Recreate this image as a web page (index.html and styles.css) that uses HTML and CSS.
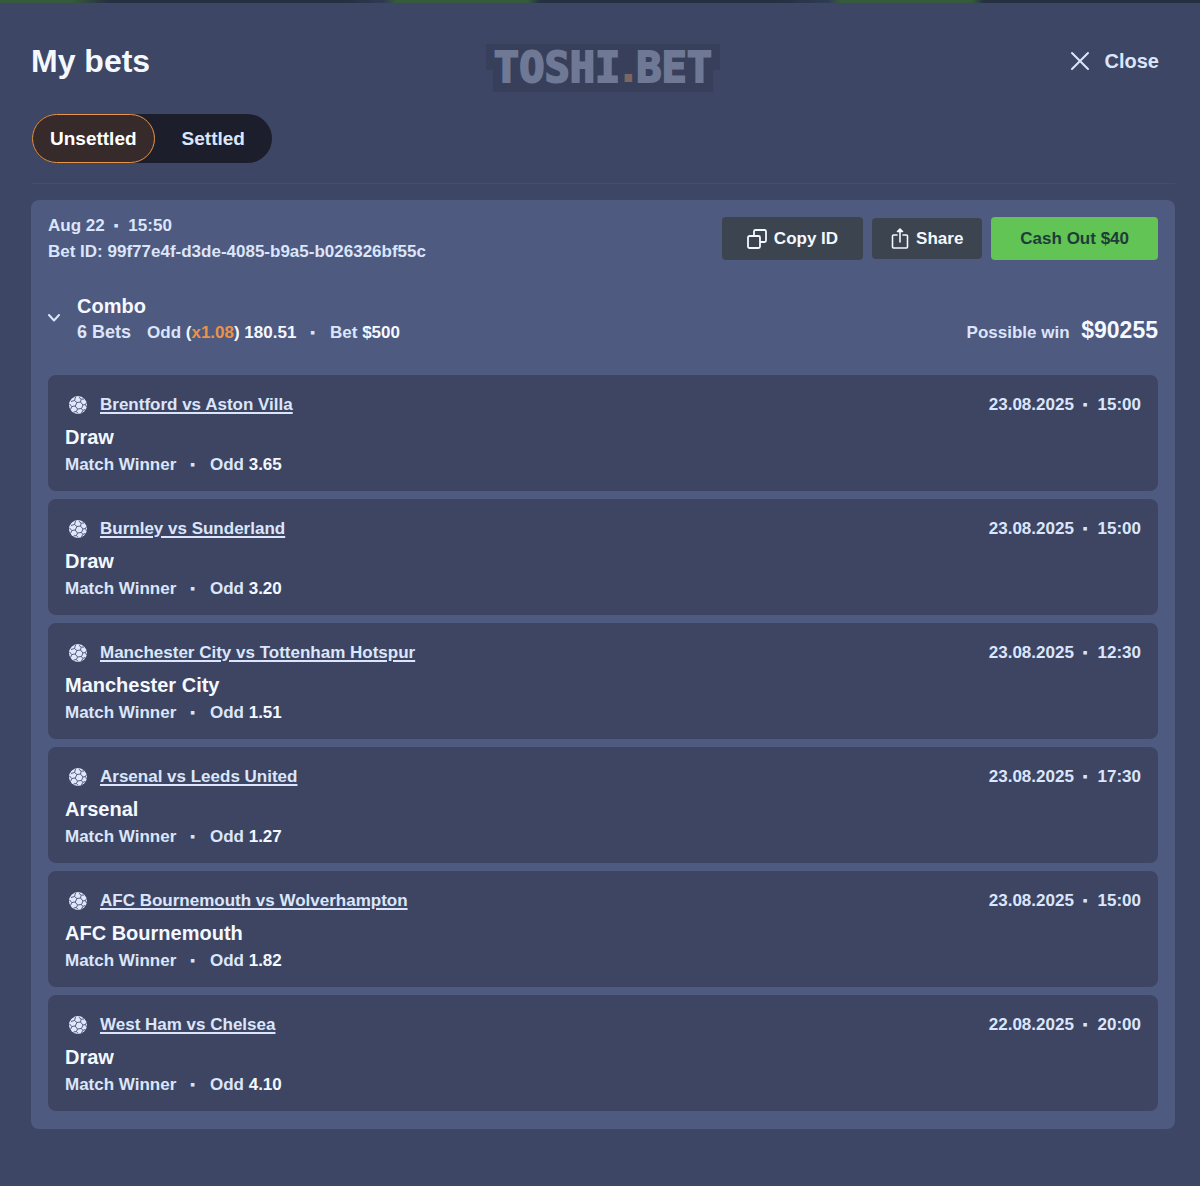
FILE: index.html
```html
<!DOCTYPE html>
<html lang="en">
<head>
    <meta charset="UTF-8">
    <meta name="viewport" content="width=device-width, initial-scale=1.0">
    <title>My bets</title>
    <link rel="stylesheet" href="styles.css">
</head>
<body>
    <svg class="sprite" aria-hidden="true">
        <symbol id="ball" viewBox="0 0 20 20">
            <circle cx="10" cy="10" r="9" fill="#dfe8fb"/>
            <g fill="none" stroke="#525c7e" stroke-width="1" stroke-linejoin="round">
                <path d="M9 7.5 L12.5 7 L15 10 L13.5 13.5 L9.5 14 L7.2 11 Z"/>
                <path d="M9 7.5 L6.5 5.5 L7.5 2 M12.5 7 L13.2 4.2 L10.8 2.2 M13.2 4.2 L16.2 4"/>
                <path d="M15 10 L17.5 9.5 L18.5 7.5 M17.5 9.5 L18.5 12"/>
                <path d="M13.5 13.5 L14.8 15.5 L13.5 18 M14.8 15.5 L17 14.5"/>
                <path d="M9.5 14 L8.5 16.5 L10 18.5 M8.5 16.5 L5.5 17"/>
                <path d="M7.2 11 L3.8 11.5 L2.5 14.5 M3.8 11.5 L1.5 9 M6.5 5.5 L3 6.5"/>
            </g>
        </symbol>
    </svg>

    <div class="backdrop"></div>

    <main class="dialog">
        <header class="dialog-header">
            <h1>My bets</h1>
            <div class="logo">TOSHI<span class="logo-dot">.</span>BET</div>
            <button type="button" class="close">
                <svg width="20" height="20" viewBox="0 0 20 20" fill="none" stroke="currentColor" stroke-width="2" stroke-linecap="round">
                    <path d="M2 2 L18 18 M18 2 L2 18"/>
                </svg>
                Close
            </button>
        </header>

        <nav class="tabs">
            <button type="button" class="tab active">Unsettled</button>
            <button type="button" class="tab">Settled</button>
        </nav>

        <hr>

        <section class="bet">
            <!-- Bet info and actions -->
            <div class="bet-header">
                <div class="bet-info">
                    <div>Aug 22<span class="dot">·</span>15:50</div>
                    <div>Bet ID: 99f77e4f-d3de-4085-b9a5-b026326bf55c</div>
                </div>
                <div class="actions">
                    <button type="button" class="btn btn-copy">
                        <svg width="20" height="20" viewBox="0 0 20 20" fill="none" stroke="currentColor" stroke-width="1.8" stroke-linejoin="round">
                            <rect x="1" y="7" width="12" height="12" rx="1.5"/>
                            <path d="M7 7 V2.5 A1.5 1.5 0 0 1 8.5 1 H17.5 A1.5 1.5 0 0 1 19 2.5 V11.5 A1.5 1.5 0 0 1 17.5 13 H13"/>
                        </svg>
                        Copy ID
                    </button>
                    <button type="button" class="btn btn-share">
                        <svg width="18" height="22" viewBox="0 0 18 22" fill="none" stroke="currentColor" stroke-width="1.6" stroke-linecap="round" stroke-linejoin="round">
                            <path d="M6 7 H2.5 A1 1 0 0 0 1.5 8 V19 A1 1 0 0 0 2.5 20 H15.5 A1 1 0 0 0 16.5 19 V8 A1 1 0 0 0 15.5 7 H12"/>
                            <path d="M9 14 V2"/>
                            <path d="M6.5 3.5 L9 1 L11.5 3.5 Z" fill="currentColor"/>
                        </svg>
                        Share
                    </button>
                    <button type="button" class="btn btn-cashout">Cash Out $40</button>
                </div>
            </div>

            <!-- Combo summary -->
            <div class="summary">
                <button type="button" class="toggle" aria-label="Collapse">
                    <svg width="12" height="8" viewBox="0 0 12 8" fill="none" stroke="currentColor" stroke-width="2" stroke-linecap="round" stroke-linejoin="round">
                        <path d="M1 1 L6 6.5 L11 1"/>
                    </svg>
                </button>
                <div class="summary-text">
                    <h2>Combo</h2>
                    <div class="summary-line">
                        <span class="count">6 Bets</span>
                        <span>Odd <b>(<span class="boost">x1.08</span>) 180.51</b><span class="dot wide">·</span>Bet <b>$500</b></span>
                    </div>
                </div>
                <div class="win">Possible win <strong>$90255</strong></div>
            </div>

            <!-- Legs -->
            <ul class="legs">
                <li class="leg">
                    <div class="leg-top">
                        <svg class="ball"><use href="#ball"/></svg>
                        <a href="#">Brentford vs Aston Villa</a>
                        <span class="time">23.08.2025<span class="dot">·</span>15:00</span>
                    </div>
                    <h3>Draw</h3>
                    <div class="market">Match Winner<span class="dot wide">·</span>Odd <b>3.65</b></div>
                </li>
                <li class="leg">
                    <div class="leg-top">
                        <svg class="ball"><use href="#ball"/></svg>
                        <a href="#">Burnley vs Sunderland</a>
                        <span class="time">23.08.2025<span class="dot">·</span>15:00</span>
                    </div>
                    <h3>Draw</h3>
                    <div class="market">Match Winner<span class="dot wide">·</span>Odd <b>3.20</b></div>
                </li>
                <li class="leg">
                    <div class="leg-top">
                        <svg class="ball"><use href="#ball"/></svg>
                        <a href="#">Manchester City vs Tottenham Hotspur</a>
                        <span class="time">23.08.2025<span class="dot">·</span>12:30</span>
                    </div>
                    <h3>Manchester City</h3>
                    <div class="market">Match Winner<span class="dot wide">·</span>Odd <b>1.51</b></div>
                </li>
                <li class="leg">
                    <div class="leg-top">
                        <svg class="ball"><use href="#ball"/></svg>
                        <a href="#">Arsenal vs Leeds United</a>
                        <span class="time">23.08.2025<span class="dot">·</span>17:30</span>
                    </div>
                    <h3>Arsenal</h3>
                    <div class="market">Match Winner<span class="dot wide">·</span>Odd <b>1.27</b></div>
                </li>
                <li class="leg">
                    <div class="leg-top">
                        <svg class="ball"><use href="#ball"/></svg>
                        <a href="#">AFC Bournemouth vs Wolverhampton</a>
                        <span class="time">23.08.2025<span class="dot">·</span>15:00</span>
                    </div>
                    <h3>AFC Bournemouth</h3>
                    <div class="market">Match Winner<span class="dot wide">·</span>Odd <b>1.82</b></div>
                </li>
                <li class="leg">
                    <div class="leg-top">
                        <svg class="ball"><use href="#ball"/></svg>
                        <a href="#">West Ham vs Chelsea</a>
                        <span class="time">22.08.2025<span class="dot">·</span>20:00</span>
                    </div>
                    <h3>Draw</h3>
                    <div class="market">Match Winner<span class="dot wide">·</span>Odd <b>4.10</b></div>
                </li>
            </ul>
        </section>
    </main>
</body>
</html>
```
FILE: styles.css
```css
* {
    box-sizing: border-box;
}

body {
    margin: 0;
    background-color: #3d4665;
    color: #dbe5fb;
    font-family: "Liberation Sans", Arial, sans-serif;
    font-size: 17px;
    font-weight: bold;
    line-height: 26px;
}

h1, h2, h3, ul {
    margin: 0;
    padding: 0;
}

button {
    border: none;
    background: none;
    color: inherit;
    font: inherit;
    cursor: pointer;
}

b, h1, h2, h3, strong {
    color: #f4f8ff;
}

.sprite {
    display: none;
}

/* Strip of the page behind the dialog */
.backdrop {
    height: 3px;
    background: linear-gradient(to right,
        #355a3c 6%, #263043 9%, #263043 29%, #2f3b55 32%,
        #355a3c 33%, #355a3c 44%, #263043 45%, #263043 65%,
        #2f3b55 69%, #355a3c 70%, #355a3c 81%, #263043 82%);
}

.dialog {
    padding: 35px 25px 56px 31px;
}

.dialog-header {
    display: grid;
    grid-template-columns: 1fr auto 1fr;
    align-items: start;
}

h1 {
    font-size: 32px;
    line-height: 46px;
}

.logo {
    padding: 0 8px;
    margin-top: 6px;
    background-color: #373f5a;
    clip-path: polygon(0 0, 100% 0, 100% 54%, 97% 54%, 97% 100%, 3% 100%, 3% 54%, 0 54%);
    color: #6f7996;
    font-family: "DejaVu Sans Mono", monospace;
    font-size: 42px;
    line-height: 48px;
    -webkit-text-stroke: 2px #6f7996;
}

.logo-dot {
    color: #7b6660;
    font-family: "DejaVu Sans", sans-serif;
    -webkit-text-stroke: 0;
}

.close {
    display: flex;
    align-items: center;
    justify-self: end;
    gap: 15px;
    padding: 0 16px;
    font-size: 20px;
    line-height: 46px;
}

.tabs {
    display: flex;
    width: fit-content;
    margin-top: 22px;
    margin-left: 1px;
    border-radius: 25px;
    background-color: #1c1f2b;
}

.tab {
    padding: 0 27px;
    border-radius: 25px;
    font-size: 19px;
    line-height: 49px;
}

.tab.active {
    padding: 0 17px;
    border: 1px solid #e8944a;
    background-color: #372a2a;
    color: #fff;
    line-height: 47px;
}

hr {
    margin: 20px 0 16px;
    border: none;
    border-top: 1px solid #444e6e;
}

.bet {
    padding: 0 17px 18px;
    border-radius: 8px;
    background-color: #4e5a7f;
}

.bet-header {
    display: flex;
    flex-wrap: wrap;
    justify-content: space-between;
    gap: 10px;
    padding: 13px 0 11px;
}

.actions {
    display: flex;
    align-items: center;
    align-self: flex-start;
    gap: 9px;
    padding-top: 4px;
}

.btn {
    display: flex;
    align-items: center;
    justify-content: center;
    gap: 7px;
    border-radius: 4px;
    background-color: #3c444f;
    color: #f4f8ff;
    line-height: 43px;
}

.btn-copy {
    padding: 0 25px;
}

.btn-share {
    padding: 0 19px;
    line-height: 41px;
}

.btn-cashout {
    padding: 0 29px;
    background-color: #62c454;
    color: #203c3a;
}

/* Separator between two values */
.dot {
    margin: 0 9px;
    -webkit-text-stroke: 1px;
}

.dot.wide {
    margin: 0 14px;
}

.summary {
    display: flex;
    align-items: flex-start;
    padding: 16px 0 29px;
}

.toggle {
    display: flex;
    width: 29px;
    padding: 22px 0 0;
}

.summary-text {
    flex: 1;
}

h2, h3 {
    font-size: 20px;
    line-height: 28px;
}

.summary-line {
    display: flex;
    align-items: baseline;
    flex-wrap: wrap;
    gap: 0 16px;
}

.count {
    font-size: 18px;
    line-height: 24px;
}

.boost {
    color: #ea9249;
}

.win {
    padding-top: 25px;
}

.win strong {
    margin-left: 7px;
    font-size: 23px;
}

.legs {
    display: grid;
    gap: 8px;
    list-style: none;
}

.leg {
    padding: 16px 17px;
    border-radius: 8px;
    background-color: #3d4563;
}

.leg-top {
    display: flex;
    align-items: center;
    line-height: 28px;
}

.ball {
    width: 20px;
    height: 20px;
    margin: 0 12px 0 3px;
}

.leg-top a {
    color: inherit;
    text-underline-offset: 2px;
    text-decoration-thickness: 2px;
}

.time {
    margin-left: auto;
}

.leg h3 {
    line-height: 36px;
}

.market {
    line-height: 20px;
}
```
